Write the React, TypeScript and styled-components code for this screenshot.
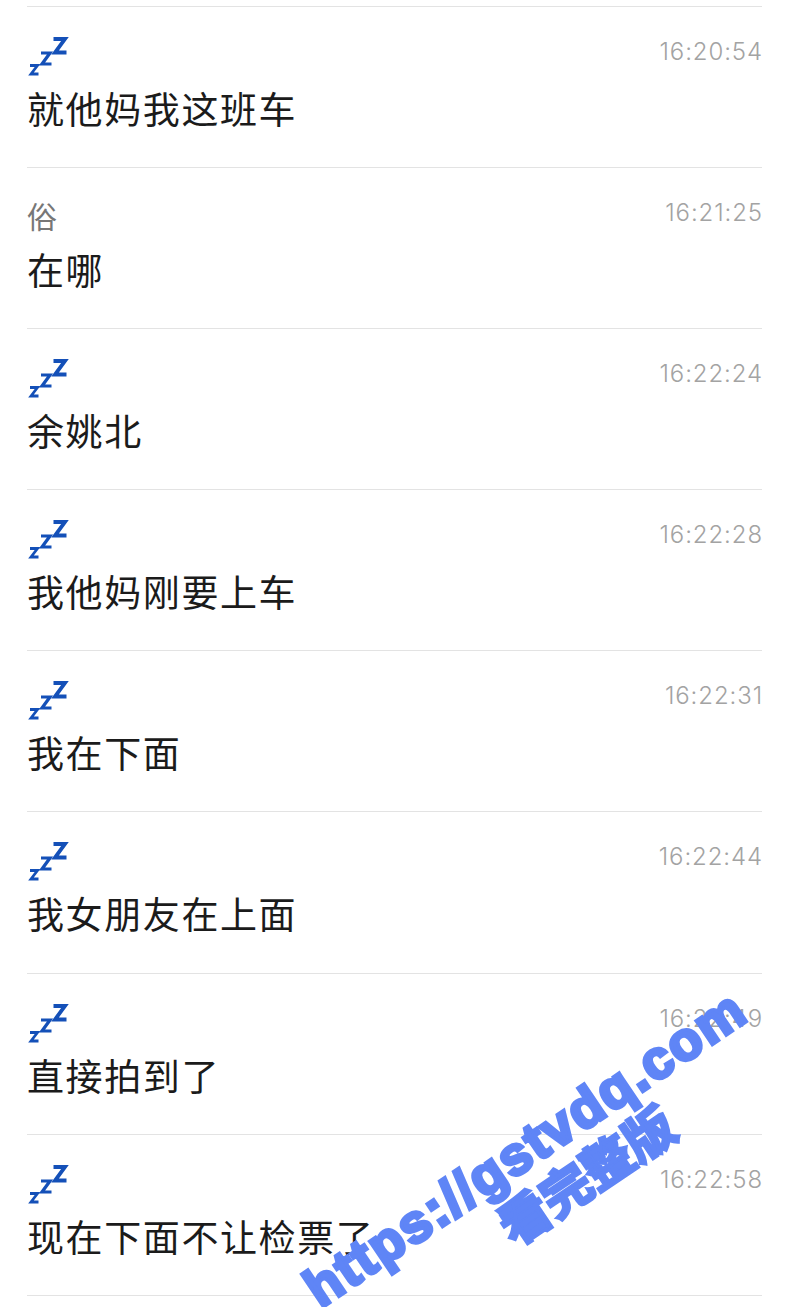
import React from "react";
import styled, { createGlobalStyle } from "styled-components";

const Global = createGlobalStyle`
  html, body { margin: 0; padding: 0; background: #fff; }
  body { width: 800px; height: 1307px; overflow: hidden; }
`;

const Page = styled.div`
  position: relative;
  width: 800px;
  height: 1307px;
  overflow: hidden;
  background: #fff;
  padding: 6px 38px 0 27px;
  box-sizing: border-box;
`;

const List = styled.div`
  display: grid;
  grid-auto-rows: 161.1px;
  border-bottom: 1px solid #e3e3e3;
`;

const Row = styled.div`
  display: grid;
  grid-template-columns: 1fr auto;
  grid-template-rows: 62px auto;
  border-top: 1px solid #e3e3e3;
  box-sizing: border-box;
  padding-top: 28px;
`;

const Sender = styled.div`
  height: 42px;
  display: flex;
  align-items: center;
  color: #777;
  font: 400 30px/42px "Noto Sans CJK SC", sans-serif;
  margin-top: -2px;
`;

const Time = styled.div`
  color: #a3a3a3;
  font: 300 24px/34px Inter, "Liberation Sans", sans-serif;
  letter-spacing: 0.9px;
  margin-right: -1px;
`;

const Message = styled.div`
  grid-column: 1 / -1;
  color: #1b1b1b;
  font: 400 37px/46px "Noto Sans CJK SC", sans-serif;
  letter-spacing: 1.6px;
  margin-top: -12px;
`;

const Watermark = styled.div<{ $x: number; $y: number; $angle: number; $size: number; $stroke: number; $spacing: number }>`
  position: absolute;
  left: ${(p) => p.$x}px;
  top: ${(p) => p.$y}px;
  transform: translate(-50%, -50%) rotate(${(p) => p.$angle}deg);
  white-space: nowrap;
  color: #5f85f6;
  font-family: "Liberation Sans", "Noto Sans CJK SC", sans-serif;
  font-weight: 700;
  font-size: ${(p) => p.$size}px;
  letter-spacing: ${(p) => p.$spacing}px;
  -webkit-text-stroke: ${(p) => p.$stroke}px #5f85f6;
`;

const ZzzIcon = () => (
  <svg width="42" height="42" viewBox="0 0 42 42" fill="none" stroke="#1450b8" style={{ marginLeft: 1, marginTop: 6 }}>
    <path d="M2 29.5h7.5L3 38h7.5" strokeWidth="2.8" />
    <path d="M13 17h9l-8 11h9.5" strokeWidth="3.2" />
    <path d="M25.5 3H37L27 16.5h11.5" strokeWidth="3.8" />
  </svg>
);

const rows = [
  { time: "16:20:54", text: "就他妈我这班车" },
  { time: "16:21:25", text: "在哪", name: "俗" },
  { time: "16:22:24", text: "余姚北" },
  { time: "16:22:28", text: "我他妈刚要上车" },
  { time: "16:22:31", text: "我在下面" },
  { time: "16:22:44", text: "我女朋友在上面" },
  { time: "16:22:49", text: "直接拍到了" },
  { time: "16:22:58", text: "现在下面不让检票了" },
];

export default function App() {
  return (
    <Page>
      <Global />
      <List>
        {rows.map((r) => (
          <Row key={r.time}>
            <Sender>{r.name ?? <ZzzIcon />}</Sender>
            <Time>{r.time}</Time>
            <Message>{r.text}</Message>
          </Row>
        ))}
      </List>
      <Watermark $x={525} $y={1148} $angle={-34} $size={54} $stroke={3.6} $spacing={2}>https://gstvdq.com</Watermark>
      <Watermark $x={585} $y={1173} $angle={-34} $size={50} $stroke={3} $spacing={0}>看完整版</Watermark>
    </Page>
  );
}
